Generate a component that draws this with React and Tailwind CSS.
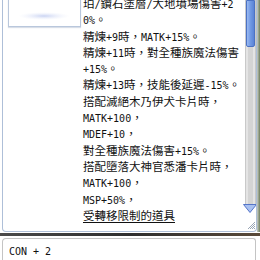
import React from "react";

// description lines, already broken as the window wraps them
const lines = [
  "珀/鑽石塗層/大地墳場傷害+2",
  "0%。",
  "精煉+9時，MATK+15%。",
  "精煉+11時，對全種族魔法傷害",
  "+15%。",
  "精煉+13時，技能後延遲-15%。",
  "搭配滅絕木乃伊犬卡片時，",
  "MATK+100，",
  "MDEF+10，",
  "對全種族魔法傷害+15%。",
  "搭配墮落大神官悉潘卡片時，",
  "MATK+100，",
  "MSP+50%，",
];

// ascii runs get the narrow half-width face
function Mixed({ text }) {
  return text.split(/([\x20-\x7e]+)/).map((part, i) =>
    /^[\x20-\x7e]+$/.test(part) ? (
      <span key={i} className="font-['DejaVu_Sans_Mono',monospace] text-[10px]">
        {part}
      </span>
    ) : (
      <span key={i}>{part}</span>
    )
  );
}

function ItemPicture() {
  return (
    <div className="w-[73px] h-[28px] -mt-px border border-[#b9c7dc] border-t-0 bg-white shadow-[0_1px_1px_#d8dee8] overflow-hidden">
      <svg width="71" height="27" viewBox="0 0 71 27">
        <defs>
          <radialGradient id="glow" cx="50%" cy="0%" r="60%">
            <stop offset="0%" stopColor="#5fe0c8" />
            <stop offset="60%" stopColor="#bff2e8" />
            <stop offset="100%" stopColor="#ffffff" stopOpacity="0" />
          </radialGradient>
          <radialGradient id="shadow" cx="50%" cy="50%" r="50%">
            <stop offset="0%" stopColor="#c9d3f2" />
            <stop offset="100%" stopColor="#eef1fb" stopOpacity="0" />
          </radialGradient>
        </defs>
        <ellipse cx="36" cy="0" rx="18" ry="7" fill="url(#glow)" />
        <ellipse cx="35" cy="17" rx="26" ry="4" fill="url(#shadow)" />
      </svg>
    </div>
  );
}

function Scrollbar() {
  return (
    <div className="w-[12px] flex flex-col items-center">
      <div className="w-[11px] h-[205px] bg-[#e4e4e4] border-x border-[#c9c9c9] flex flex-col">
        <div className="h-[47px] bg-gradient-to-r from-[#9bbaf2] via-[#7199e4] to-[#5a83d6] border border-[#4c72c4] rounded-b-[2px]" />
        <div className="flex-1 mx-[2px] bg-[#d4d4d4]" />
      </div>
      <svg width="14" height="9" viewBox="0 0 14 9" className="-mt-px">
        <path d="M0.5 0.5 H13.5 L7 8.5 Z" fill="#a9c1f1" stroke="#5575c8" />
      </svg>
      <div className="flex-1" />
      <svg width="9" height="9" viewBox="0 0 9 9" className="self-end mb-[1px]">
        <path d="M8 1 L1 8 M8 3 L3 8 M8 5 L5 8 M8 7 L7 8" stroke="#9aa6b6" strokeWidth="1" />
      </svg>
    </div>
  );
}

export default function App() {
  return (
    <div className="w-[260px] h-[260px] bg-white overflow-hidden flex flex-col text-[11.5px] leading-[16px] text-[#111] font-['Noto_Sans_CJK_TC','Noto_Sans_CJK_JP',sans-serif]">
      <div className="flex h-[235px]">
        <div className="w-[255px] ml-[2px] border-l border-r border-b border-[#aebfd8] rounded-b-[4px] flex overflow-hidden">
          <div className="w-[79px] pl-[5px]">
            <ItemPicture />
          </div>
          <div className="flex-1 -mt-[5px] pl-[1px] whitespace-nowrap overflow-hidden">
            {lines.map((l, i) => (
              <div key={i} className="h-[16.3px]">
                <Mixed text={l} />
              </div>
            ))}
            <div className="h-[16.3px] underline underline-offset-2">受轉移限制的道具</div>
          </div>
          <Scrollbar />
        </div>
        <div className="flex-1 bg-gradient-to-r from-[#c8ccc8] to-[#6f7f5c]" />
      </div>
      <div className="h-[3px] mt-[1px] bg-gradient-to-r from-[#4a4a4a] via-[#2e2e2e] to-[#5a4a3a]" />
      <div className="flex-1 mt-[2px] ml-[2px] mr-[4px] border-l border-t border-r border-[#c4c4c4] rounded-tl-[4px] rounded-tr-[3px] pl-[6px] pt-[3px]">
        <span className="font-['DejaVu_Sans_Mono',monospace] text-[10px] text-[#111]">CON + 2</span>
      </div>
    </div>
  );
}
